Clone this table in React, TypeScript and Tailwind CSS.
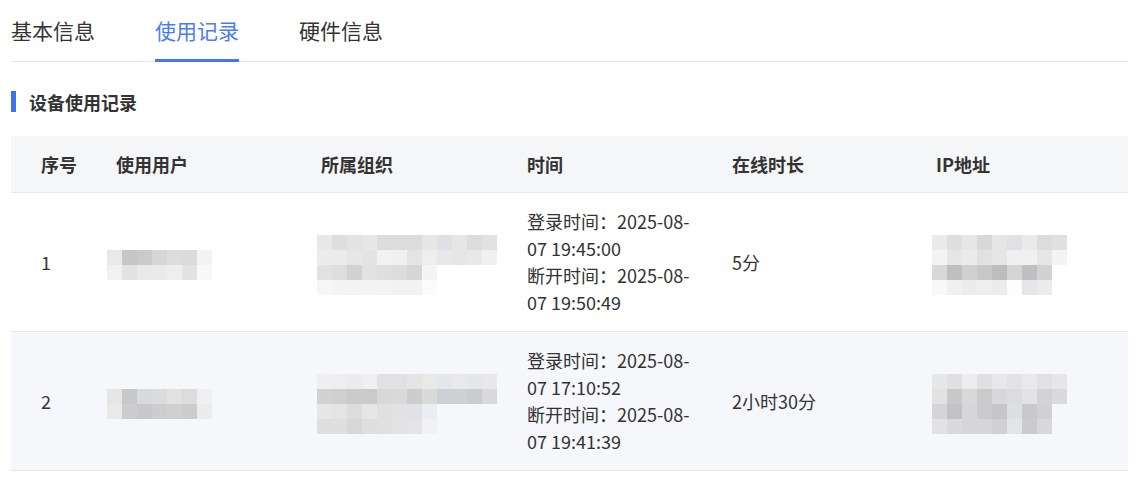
import React from 'react';

const FONT = '"Noto Sans CJK SC", "Noto Sans", sans-serif';

// redacted (mosaic) blocks, one string of colours per row
type Mosaic = string[][];

const user1: Mosaic = [
  ['#e9e9e9', '#c6c6c6', '#c9cace', '#d6d6d6', '#dcdddd', '#dddbda', '#f2f3f4'],
  ['#f1f1f1', '#e2e2e2', '#e8e9e9', '#ebeaea', '#eeeeee', '#e4e2e1', '#f8f8f9'],
];
const org1: Mosaic = [
  ['#e8e8e8', '#dedede', '#e3e3e3', '#e6e6e6', '#dcdcdc', '#dcdcdc', '#dcdcdc', '#e8e6e4', '#dfe0e4', '#e6e6e6', '#dcdcdc', '#e1e1e3'],
  ['#ececec', '#ebebeb', '#e6e6e6', '#e3e3e3', '#f1f1f0', '#f0f0f0', '#e4e4e4', '#eeeeee', '#e7e8ea', '#e6e6e6', '#e8e8e8', '#f0f0f0'],
  ['#e2e2e2', '#dedede', '#d2d2d2', '#e2e2e2', '#dfdfdf', '#dcdcdc', '#d6d6d6', '#f4f4f5'],
  ['#f6f6f6', '#f4f4f4', '#f3f3f3', '#f4f4f4', '#f3f3f3', '#f2f2f2', '#f2f2f2', '#fbfbfb'],
];
const ip1: Mosaic = [
  ['#eaeaea', '#dedede', '#e6e6e6', '#d8d8d8', '#e6e6e6', '#e0e1e4', '#eaeaea', '#dcdcdc', '#e0e0e0'],
  ['#f3f3f3', '#e6e6e6', '#eaeaea', '#e1e1e1', '#e6e6e6', '#efefef', '#f0f0f0', '#e6e6e6', '#f4f4f4'],
  ['#d8d8d8', '#bfbfbf', '#d0d0d0', '#c8c8c8', '#bdbdbd', '#d4d4d4', '#c0c0c4', '#d2d2d2'],
  ['#f8f8f8', '#f0f0f0', '#ececec', '#eeeeee', '#ececec', '#fdfdfd', '#e6e6e6', '#ececec'],
];
const user2: Mosaic = [
  ['#e6e6e6', '#c8c8c8', '#d6dadc', '#dbdbdb', '#e2e2e2', '#dddcdc', '#f0f0f2'],
  ['#e9e9e9', '#cccccc', '#c8c8cc', '#cdcdcd', '#d0d0d0', '#cccccc', '#ececee'],
];
const org2: Mosaic = [
  ['#efeff0', '#eeeeef', '#ececed', '#f0f0f1', '#e1e1e2', '#e1e1e2', '#e4e4e4', '#e9e9e7', '#e5e6e9', '#e9e9ea', '#e5e6e8', '#e8e8eb'],
  ['#d2d2d2', '#cfcfcf', '#cbcbcb', '#c9cacc', '#d8d8da', '#dadadc', '#cdcdce', '#dbdad8', '#cdd0d4', '#cfd0d2', '#cbcccf', '#d8d9dc'],
  ['#e7e7e8', '#e4e4e5', '#dcdcdd', '#e6e6e7', '#e0e0e1', '#e2e2e4', '#e2e2e4', '#eaedf1'],
  ['#dfdfe0', '#dfdfe0', '#d7d7d8', '#dedee0', '#e0e0e1', '#e1e3e4', '#e4e4e6', '#f0f2f5'],
];
const ip2: Mosaic = [
  ['#e6e7e9', '#e0e0e2', '#ededee', '#e0e0e1', '#e8e8ea', '#e3e3e6', '#e9e9eb', '#e1e1e3', '#e6e6e8'],
  ['#e2e2e3', '#c8c8c9', '#d8d8d9', '#cacacc', '#d8d8da', '#dcdcde', '#e3e3e5', '#d3d3d5', '#dadadc'],
  ['#d5d5d7', '#c2c2c4', '#d6d6d8', '#cbcbcd', '#c6c6c8', '#dde0e0', '#c9c8cd', '#d1d1d5'],
  ['#e2e2e4', '#dadadc', '#d6d6d8', '#d6d6d8', '#d1d1d3', '#e2e5e6', '#cbcbcf', '#d8d8da'],
];

const Blur: React.FC<{ data: Mosaic }> = ({ data }) => (
  <div className="flex flex-col">
    {data.map((row, i) => (
      <div key={i} className="flex">
        {row.map((c, j) => (
          <div key={j} className="w-[15px] h-[15px]" style={{ backgroundColor: c }} />
        ))}
      </div>
    ))}
  </div>
);

const rows = [
  {
    no: '1',
    user: user1,
    org: org1,
    login: ['登录时间：2025-08-', '07 19:45:00'],
    logout: ['断开时间：2025-08-', '07 19:50:49'],
    dur: '5分',
    ip: ip1,
    bg: 'bg-white',
  },
  {
    no: '2',
    user: user2,
    org: org2,
    login: ['登录时间：2025-08-', '07 17:10:52'],
    logout: ['断开时间：2025-08-', '07 19:41:39'],
    dur: '2小时30分',
    ip: ip2,
    bg: 'bg-[#f5f7fa]',
  },
];

const cols = 'grid grid-cols-[75px_205px_206px_205px_204px_1fr]';

export default function App() {
  return (
    <div className="w-[1144px] h-[493px] bg-white pl-[11px] pr-[16px] text-[#333333]" style={{ fontFamily: FONT }}>
      {/* tabs */}
      <div className="flex gap-[60px] h-[62px] border-b border-[#e4e7ed]">
        <div className="relative flex items-center text-[21px] leading-none">基本信息</div>
        <div className="relative flex items-center text-[21px] leading-none text-[#4a7bf4]">
          使用记录
          <div className="absolute left-0 right-0 bottom-[-1px] h-[3px] bg-[#4276f2]" />
        </div>
        <div className="relative flex items-center text-[21px] leading-none">硬件信息</div>
      </div>

      {/* section title */}
      <div className="flex items-center h-[21px] mt-[29px]">
        <div className="w-[5px] h-full bg-[#3d73f2]" />
        <span className="ml-[13px] text-[18px] font-bold leading-none">设备使用记录</span>
      </div>

      {/* table */}
      <div className="mt-[24px]">
        <div className={`${cols} h-[57px] bg-[#f5f6f8] border-b border-[#e4e7ed] text-[18px] font-bold items-center`}>
          <div className="pl-[30px]">序号</div>
          <div className="pl-[30px]">使用用户</div>
          <div className="pl-[30px]">所属组织</div>
          <div className="pl-[30px]">时间</div>
          <div className="pl-[30px]">在线时长</div>
          <div className="pl-[30px]">IP地址</div>
        </div>
        {rows.map((r) => (
          <div key={r.no} className={`${cols} ${r.bg} h-[139px] border-b border-[#e4e7ed] text-[18px] items-center`}>
            <div className="pl-[30px]">{r.no}</div>
            <div className="pl-[21px] pt-[6px]">
              <Blur data={r.user} />
            </div>
            <div className="pl-[26px] pt-[6px]">
              <Blur data={r.org} />
            </div>
            <div className="pl-[30px] leading-[27px] whitespace-nowrap">
              <div>{r.login[0]}</div>
              <div>{r.login[1]}</div>
              <div>{r.logout[0]}</div>
              <div>{r.logout[1]}</div>
            </div>
            <div className="pl-[30px]">{r.dur}</div>
            <div className="pl-[26px] pt-[6px]">
              <Blur data={r.ip} />
            </div>
          </div>
        ))}
      </div>
    </div>
  );
}
